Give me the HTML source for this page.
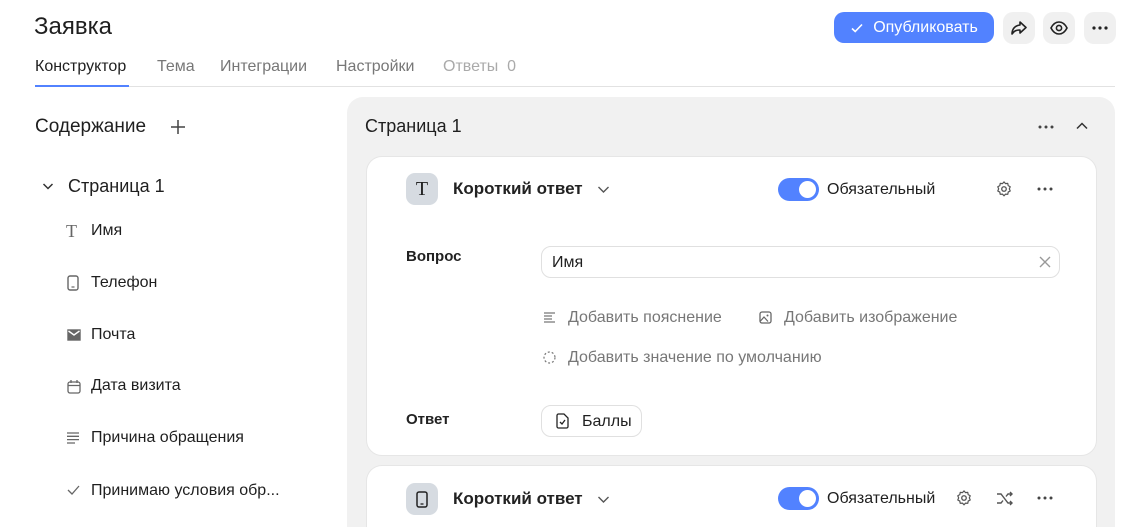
<!DOCTYPE html>
<html><head><meta charset="utf-8"><style>
*{box-sizing:border-box;margin:0;padding:0}
html,body{width:1135px;height:527px;overflow:hidden}
body{background:#fff;font-family:"Liberation Sans",sans-serif;color:#1f1f1f;position:relative}
.a{position:absolute;white-space:nowrap}
.ib{position:absolute;width:32px;height:32px;border-radius:10px;background:#f0f0f0;display:flex;align-items:center;justify-content:center}
svg{display:block}
.lt{color:#777}
</style></head><body>
<div class="a" style="left:34px;top:13px;font-size:24px;color:#1f1f1f">Заявка</div>
<div class="a" style="left:834px;top:12px;width:160px;height:31px;border-radius:10px;background:#5282ff;color:#fff;font-size:16px;display:flex;align-items:center;justify-content:center;gap:9px">
<svg width="14" height="14" viewBox="0 0 14 14"><path d="M2 7.5l3.2 3L12 3.5" stroke="#fff" stroke-width="1.6" fill="none"/></svg>Опубликовать</div>
<div class="ib" style="left:1003px;top:12px"><svg width="20" height="20" viewBox="0 0 20 20"><path d="M11 4l6 5.5-6 5.5v-3c-4 0-6 1-8 4 0-5 3-8.5 8-9z" stroke="#222" stroke-width="1.6" fill="none" stroke-linejoin="round"/></svg></div>
<div class="ib" style="left:1043px;top:12px"><svg width="20" height="20" viewBox="0 0 20 20"><path d="M2 10c2-4 5-6 8-6s6 2 8 6c-2 4-5 6-8 6s-6-2-8-6z" stroke="#222" stroke-width="1.6" fill="none"/><circle cx="10" cy="10" r="2.6" stroke="#222" stroke-width="1.6" fill="none"/></svg></div>
<div class="ib" style="left:1084px;top:12px"><svg width="16" height="4" viewBox="0 0 16 4"><circle cx="2" cy="2" r="1.6" fill="#222"/><circle cx="8" cy="2" r="1.6" fill="#222"/><circle cx="14" cy="2" r="1.6" fill="#222"/></svg></div>

<div class="a" style="left:35px;top:58px;font-size:16px">Конструктор</div>
<div class="a lt" style="left:157px;top:58px;font-size:16px">Тема</div>
<div class="a lt" style="left:220px;top:58px;font-size:16px">Интеграции</div>
<div class="a lt" style="left:336px;top:58px;font-size:16px">Настройки</div>
<div class="a" style="left:443px;top:58px;font-size:16px;color:#aaa">Ответы &nbsp;0</div>
<div class="a" style="left:35px;top:86px;width:1080px;height:1px;background:#e2e2e2"></div>
<div class="a" style="left:35px;top:85px;width:94px;height:2px;background:#5282ff"></div>

<div class="a" style="left:35px;top:116px;font-size:19px">Содержание</div>
<svg class="a" style="left:170px;top:119px" width="16" height="16" viewBox="0 0 16 16"><path d="M8 1v14M1 8h14" stroke="#444" stroke-width="1.5"/></svg>
<svg class="a" style="left:42px;top:181px" width="12" height="10" viewBox="0 0 12 10"><path d="M1.5 3l4.5 4.5L10.5 3" stroke="#333" stroke-width="1.5" fill="none"/></svg>
<div class="a" style="left:68px;top:176px;font-size:18px">Страница 1</div>

<div class="a" style="left:66px;top:221px;font-size:18px;color:#666;font-family:'Liberation Serif',serif">T</div>
<div class="a" style="left:91px;top:222px;font-size:16px">Имя</div>
<svg class="a" style="left:67px;top:275px" width="12" height="16" viewBox="0 0 12 16"><rect x="1" y="1" width="10" height="14" rx="2" stroke="#666" stroke-width="1.4" fill="none"/><path d="M4.5 12h3" stroke="#666" stroke-width="1.2"/></svg>
<div class="a" style="left:91px;top:274px;font-size:16px">Телефон</div>
<svg class="a" style="left:67px;top:329px" width="14" height="12" viewBox="0 0 14 12"><rect x="1" y="1" width="12" height="10" stroke="#666" stroke-width="1.4" fill="#666"/><path d="M1.5 2l5.5 4 5.5-4" stroke="#fff" stroke-width="1.4" fill="none"/></svg>
<div class="a" style="left:91px;top:326px;font-size:16px">Почта</div>
<svg class="a" style="left:67px;top:379px" width="14" height="15" viewBox="0 0 14 15"><rect x="1" y="3" width="12" height="11" rx="2" stroke="#666" stroke-width="1.3" fill="none"/><path d="M1 6.5h12M4 1v3M10 1v3" stroke="#666" stroke-width="1.3"/></svg>
<div class="a" style="left:91px;top:377px;font-size:16px">Дата визита</div>
<svg class="a" style="left:67px;top:432px" width="13" height="12" viewBox="0 0 13 12"><path d="M0 1h12M0 4.3h12M0 7.6h12M0 11h8" stroke="#666" stroke-width="1.3"/></svg>
<div class="a" style="left:91px;top:429px;font-size:16px">Причина обращения</div>
<svg class="a" style="left:67px;top:485px" width="13" height="10" viewBox="0 0 13 10"><path d="M1 5l4 4L12 1" stroke="#666" stroke-width="1.3" fill="none"/></svg>
<div class="a" style="left:91px;top:482px;font-size:16px">Принимаю условия обр...</div>

<div class="a" style="left:347px;top:97px;width:768px;height:430px;border-radius:16px 16px 0 0;background:#f1f1f1"></div>
<div class="a" style="left:365px;top:116px;font-size:18px">Страница 1</div>
<svg class="a" style="left:1038px;top:125px" width="16" height="4" viewBox="0 0 16 4"><circle cx="2" cy="2" r="1.5" fill="#444"/><circle cx="8" cy="2" r="1.5" fill="#444"/><circle cx="14" cy="2" r="1.5" fill="#444"/></svg>
<svg class="a" style="left:1075px;top:121px" width="14" height="10" viewBox="0 0 14 10"><path d="M2 7.5l5-5 5 5" stroke="#333" stroke-width="1.5" fill="none"/></svg>

<div class="a" style="left:366px;top:156px;width:731px;height:300px;border-radius:16px;background:#fff;border:1px solid #e6e6e6"></div>
<div class="a" style="left:406px;top:173px;width:32px;height:32px;border-radius:9px;background:#d6dbe1;display:flex;align-items:center;justify-content:center;font-family:'Liberation Serif',serif;font-size:20px">T</div>
<div class="a" style="left:453px;top:179px;font-size:17px;font-weight:bold;color:#222">Короткий ответ</div>
<svg class="a" style="left:597px;top:185px" width="13" height="9" viewBox="0 0 13 9"><path d="M1.5 2l5 5 5-5" stroke="#555" stroke-width="1.4" fill="none"/></svg>
<div class="a" style="left:778px;top:178px;width:41px;height:23px;border-radius:12px;background:#5282ff"><div style="position:absolute;right:3px;top:3px;width:17px;height:17px;border-radius:50%;background:#fff"></div></div>
<div class="a" style="left:827px;top:181px;font-size:16px">Обязательный</div>
<svg class="a" style="left:995px;top:180px" width="18" height="18" viewBox="0 0 24 24"><circle cx="12" cy="12" r="3" stroke="#555" stroke-width="1.8" fill="none"/><path d="M12 2.5l2 2.3 3-.3.6 3 2.7 1.5-1.2 2.8 1.2 2.8-2.7 1.5-.6 3-3-.3-2 2.3-2-2.3-3 .3-.6-3-2.7-1.5 1.2-2.8-1.2-2.8 2.7-1.5.6-3 3 .3z" stroke="#555" stroke-width="1.6" fill="none" stroke-linejoin="round"/></svg>
<svg class="a" style="left:1037px;top:187px" width="16" height="4" viewBox="0 0 16 4"><circle cx="2" cy="2" r="1.5" fill="#444"/><circle cx="8" cy="2" r="1.5" fill="#444"/><circle cx="14" cy="2" r="1.5" fill="#444"/></svg>

<div class="a" style="left:406px;top:248px;font-size:15px;font-weight:bold;color:#222">Вопрос</div>
<div class="a" style="left:541px;top:246px;width:519px;height:32px;border-radius:10px;border:1px solid #e0e0e0;padding:7px 10px;font-size:16px">Имя</div>
<svg class="a" style="left:1039px;top:256px" width="12" height="12" viewBox="0 0 12 12"><path d="M1 1l10 10M11 1L1 11" stroke="#999" stroke-width="1.4"/></svg>
<svg class="a" style="left:544px;top:312px" width="12" height="11" viewBox="0 0 12 11"><path d="M0 1h11M0 4h8M0 7h8M0 10h11" stroke="#777" stroke-width="1.2"/></svg>
<div class="a lt" style="left:568px;top:309px;font-size:16px">Добавить пояснение</div>
<svg class="a" style="left:759px;top:311px" width="13" height="13" viewBox="0 0 13 13"><rect x="1" y="1" width="11" height="11" rx="2" stroke="#666" stroke-width="1.3" fill="none"/><circle cx="8.5" cy="4.5" r="1" fill="#666"/><path d="M1.5 10l3.5-4 4 4.5" stroke="#666" stroke-width="1.2" fill="none"/></svg>
<div class="a lt" style="left:784px;top:309px;font-size:16px">Добавить изображение</div>
<svg class="a" style="left:543px;top:351px" width="13" height="13" viewBox="0 0 13 13"><circle cx="6.5" cy="6.5" r="5.5" stroke="#777" stroke-width="1.2" fill="none" stroke-dasharray="2 2"/></svg>
<div class="a lt" style="left:568px;top:349px;font-size:16px">Добавить значение по умолчанию</div>

<div class="a" style="left:406px;top:411px;font-size:15px;font-weight:bold;color:#222">Ответ</div>
<div class="a" style="left:541px;top:405px;width:101px;height:32px;border-radius:10px;border:1px solid #e0e0e0"></div>
<svg class="a" style="left:556px;top:413px" width="13" height="16" viewBox="0 0 13 16"><path d="M1 2.5a1.5 1.5 0 011.5-1.5H8l4 4v8.5a1.5 1.5 0 01-1.5 1.5h-8A1.5 1.5 0 011 13.5z" stroke="#222" stroke-width="1.3" fill="none"/><path d="M4 9l2 2 3-4" stroke="#222" stroke-width="1.3" fill="none"/></svg>
<div class="a" style="left:582px;top:413px;font-size:16px">Баллы</div>

<div class="a" style="left:366px;top:465px;width:731px;height:62px;border-radius:16px 16px 0 0;background:#fff;border:1px solid #e6e6e6;border-bottom:none"></div>
<div class="a" style="left:406px;top:483px;width:32px;height:32px;border-radius:9px;background:#d6dbe1;display:flex;align-items:center;justify-content:center"><svg width="12" height="17" viewBox="0 0 12 17"><rect x="1" y="1" width="10" height="15" rx="2" stroke="#222" stroke-width="1.5" fill="none"/><path d="M4.5 13h3" stroke="#222" stroke-width="1.3"/></svg></div>
<div class="a" style="left:453px;top:489px;font-size:17px;font-weight:bold;color:#222">Короткий ответ</div>
<svg class="a" style="left:597px;top:495px" width="13" height="9" viewBox="0 0 13 9"><path d="M1.5 2l5 5 5-5" stroke="#555" stroke-width="1.4" fill="none"/></svg>
<div class="a" style="left:778px;top:487px;width:41px;height:23px;border-radius:12px;background:#5282ff"><div style="position:absolute;right:3px;top:3px;width:17px;height:17px;border-radius:50%;background:#fff"></div></div>
<div class="a" style="left:827px;top:490px;font-size:16px">Обязательный</div>
<svg class="a" style="left:955px;top:489px" width="18" height="18" viewBox="0 0 24 24"><circle cx="12" cy="12" r="3" stroke="#555" stroke-width="1.8" fill="none"/><path d="M12 2.5l2 2.3 3-.3.6 3 2.7 1.5-1.2 2.8 1.2 2.8-2.7 1.5-.6 3-3-.3-2 2.3-2-2.3-3 .3-.6-3-2.7-1.5 1.2-2.8-1.2-2.8 2.7-1.5.6-3 3 .3z" stroke="#555" stroke-width="1.6" fill="none" stroke-linejoin="round"/></svg>
<svg class="a" style="left:996px;top:491px" width="18" height="15" viewBox="0 0 18 15"><path d="M1 3h4l7 9h4M1 12h4l2-2.5M10 5.5L12 3h4M14 1l2 2-2 2M14 10l2 2-2 2" stroke="#555" stroke-width="1.4" fill="none"/></svg>
<svg class="a" style="left:1037px;top:496px" width="16" height="4" viewBox="0 0 16 4"><circle cx="2" cy="2" r="1.5" fill="#444"/><circle cx="8" cy="2" r="1.5" fill="#444"/><circle cx="14" cy="2" r="1.5" fill="#444"/></svg>
</body></html>
